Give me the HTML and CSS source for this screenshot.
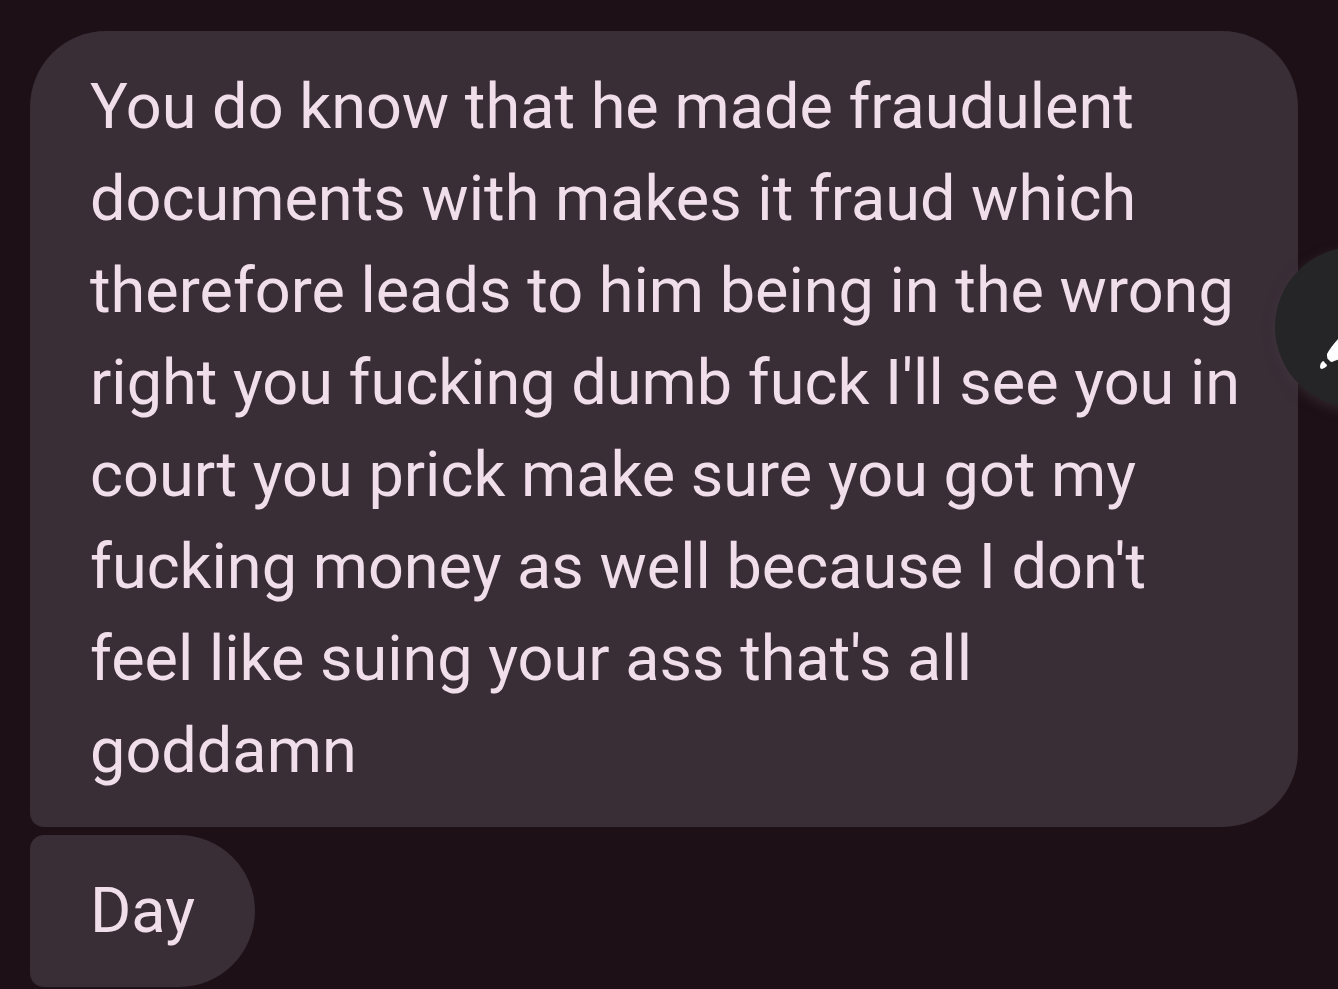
FILE: index.html
```html
<!DOCTYPE html>
<html lang="en">
<head>
    <meta charset="UTF-8">
    <title>Messages</title>
    <link rel="stylesheet" href="styles.css">
</head>
<body>
<main class="chat">
    <p class="bubble first">
        You do know that he made fraudulent<br>
        documents with makes it fraud which<br>
        therefore leads to him being in the wrong<br>
        right you fucking dumb fuck I'll see you in<br>
        court you prick make sure you got my<br>
        fucking money as well because I don't<br>
        feel like suing your ass that's all<br>
        goddamn
    </p>
    <p class="bubble last">Day</p>
</main>
<button class="edit" type="button" aria-label="Edit">
    <svg viewBox="0 0 160 160">
        <path d="M52 107 Q55 101 63 92 L88 62 L104 76 L76 104 Q68 111 62 113 Q59 114 57 115 Q55 115 54 113 Q52 112 52 109 Z"/>
        <path d="M45 120 Q45 116 48 114 Q49 114 50 116 Q52 117 52 119 Q50 121 47 122 Q45 122 45 120 Z"/>
    </svg>
</button>
</body>
</html>
```

FILE: styles.css
```css
* {
    padding: 0;
    margin: 0;
    box-sizing: border-box;
}

body {
    background: #1d1017;
    color: #f0deea;
    font-family: Roboto, sans-serif;
    font-size: 63px;
    line-height: 92px;
    overflow: hidden;
}

.chat {
    display: flex;
    flex-direction: column;
    align-items: flex-start;
    gap: 8px;
    padding: 31px 40px 2px 30px;
}

.bubble {
    padding: 30px 60px;
    background: #392d36;
    white-space: nowrap;
}

.first {
    align-self: stretch;
    border-radius: 76px 76px 76px 14px;
}

.last {
    border-radius: 14px 76px 76px 14px;
}

/* floating button, partly off the right edge */
.edit {
    position: fixed;
    top: 247px;
    right: -97px;
    width: 160px;
    height: 160px;
    border: 0;
    border-radius: 50%;
    background: #252527;
    box-shadow: 0 4px 12px rgba(70, 60, 68, 0.5);
    cursor: pointer;
}

.edit svg {
    display: block;
    width: 160px;
    height: 160px;
    fill: #fff;
}
```
